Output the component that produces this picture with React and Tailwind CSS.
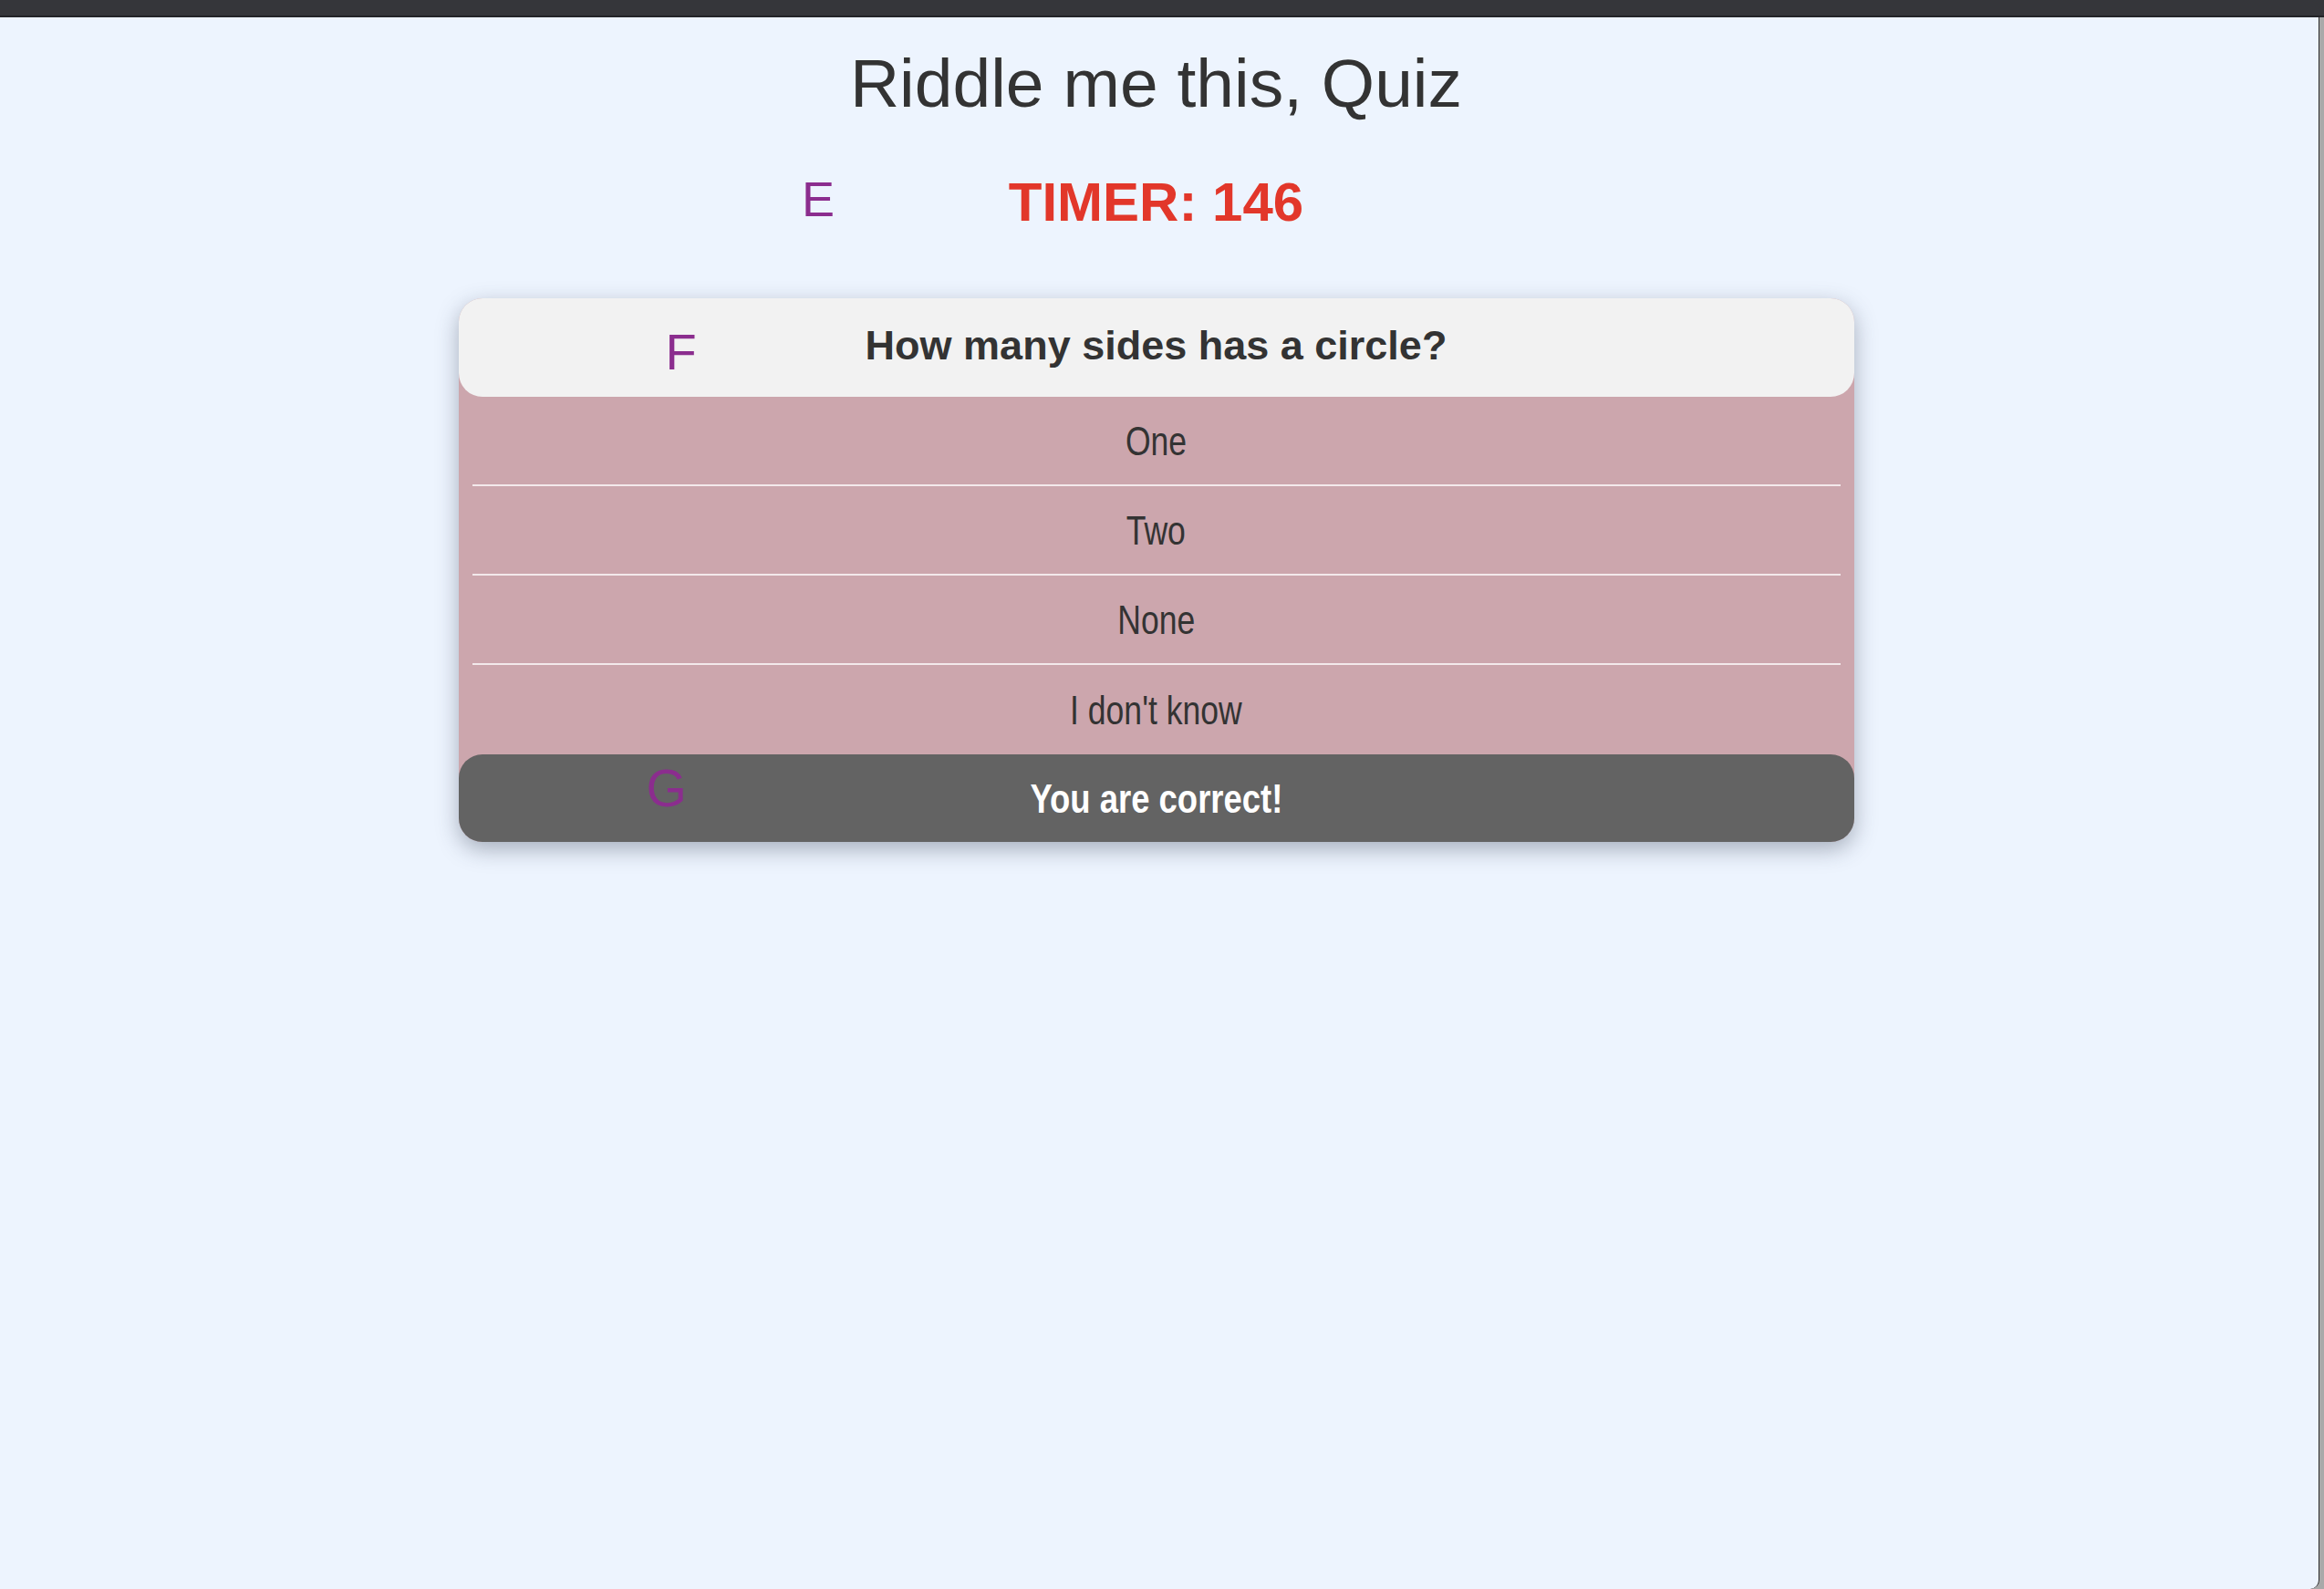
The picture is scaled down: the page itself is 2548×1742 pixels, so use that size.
import React from 'react'

const options = ['One', 'Two', 'None', "I don't know"]

const App = () => {
  return (
    <div className="flex h-[1742px] w-[2548px] flex-col bg-[#a9a9a9] font-['Liberation_Sans',Arial,sans-serif]">
      <div className="h-[17px] w-full bg-[#35363a]" />
      <div className="h-[2px] w-full bg-[#232427]" />
      <div className="flex flex-1">
        <main className="relative flex w-[2543px] flex-col items-center rounded-br-[10px] border-r border-[#2a2a2a] bg-[#edf4fe]">
          <div className="flex w-[2535px] flex-col items-center self-start">
            <h1 className="mt-[34px] text-[75px] leading-[76px] text-[#333333]">Riddle me this, Quiz</h1>

            <div className="relative mt-[63px] w-full">
              <span className="absolute left-[879px] top-[-1px] text-[54px] leading-[54px] text-[#8b2d8e]">E</span>
              <p className="text-center text-[60px] font-bold leading-[60px] text-[#e2372a]">TIMER: 146</p>
            </div>

            <div className="relative mt-[75px] w-[1530px] rounded-[26px] bg-[#cca6ad] shadow-[0_8px_24px_rgba(60,70,90,0.4)]">
              <div className="relative flex h-[108px] items-center justify-center rounded-[26px] bg-[#f2f2f2] pb-[5px]">
                <span className="absolute left-[227px] top-[31px] text-[56px] leading-[56px] text-[#8b2d8e]">F</span>
                <h2 className="text-[45px] font-bold leading-[45px] text-[#333333]">How many sides has a circle?</h2>
              </div>

              <ul>
                {options.map((opt, i) => (
                  <li
                    key={opt}
                    className={`mx-[15px] flex h-[98px] items-center justify-center text-[45px] leading-[45px] text-[#333333] ${
                      i < options.length - 1 ? 'border-b-2 border-[#f3e9eb]' : ''
                    }`}
                  >
                    <span className="inline-block scale-x-[0.79]">{opt}</span>
                  </li>
                ))}
              </ul>

              <div className="relative flex h-[96px] items-center justify-center rounded-[26px] bg-[#636363]">
                <span className="absolute left-[206px] top-[9px] text-[57px] leading-[57px] text-[#8b2d8e]">G</span>
                <p className="inline-block scale-x-[0.81] text-[45px] font-bold leading-[45px] text-white">
                  You are correct!
                </p>
              </div>
            </div>
          </div>
        </main>
      </div>
    </div>
  )
}

export default App
